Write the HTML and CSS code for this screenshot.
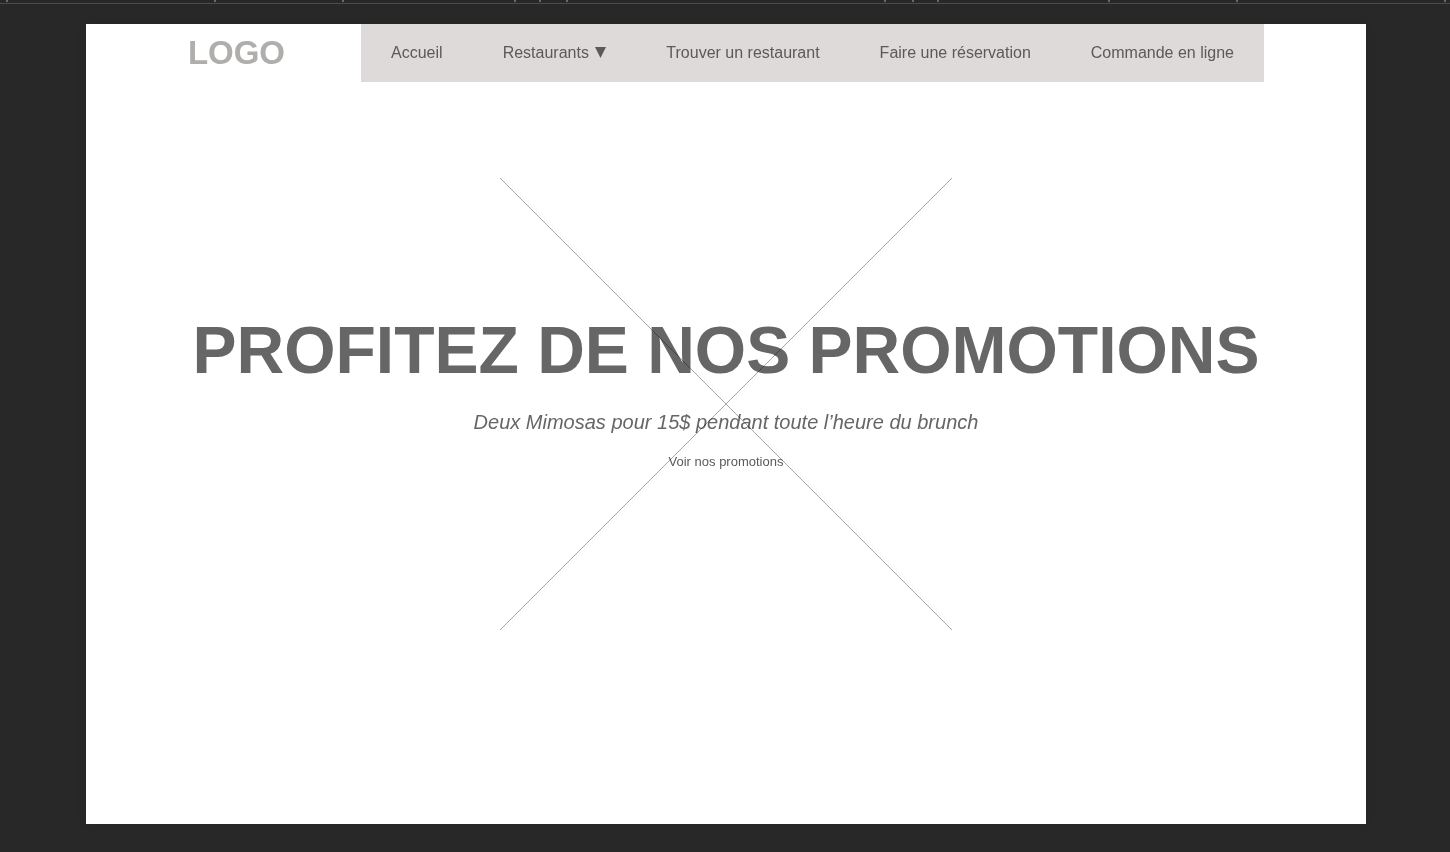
FILE: index.html
```html
<!DOCTYPE html>
<html lang="fr">
<head>
<meta charset="utf-8">
<title>Promotions</title>
<link rel="stylesheet" href="styles.css">
</head>
<body>
<svg class="ruler" viewBox="0 0 1450 4" preserveAspectRatio="none" aria-hidden="true">
  <path class="ruler-ticks" d="M6 0h2v2h-2zM214 0h2v2h-2zM342 0h2v2h-2zM514 0h2v2h-2zM539 0h2v2h-2zM566 0h2v2h-2zM884 0h2v2h-2zM912 0h2v2h-2zM937 0h2v2h-2zM1108 0h2v2h-2zM1236 0h2v2h-2zM1444 0h2v2h-2z"/>
  <path class="ruler-edge" d="M0 3h1450v1H0z"/>
</svg>
<div class="artboard">
  <header class="header">
    <a class="logo" href="#">LOGO</a>
    <nav class="nav">
      <a class="nav-link" href="#">Accueil</a>
      <a class="nav-link" href="#">Restaurants
        <svg class="caret" viewBox="0 0 12 12" aria-hidden="true"><path d="M0 0h12L6 12z"/></svg>
      </a>
      <a class="nav-link" href="#">Trouver un restaurant</a>
      <a class="nav-link" href="#">Faire une réservation</a>
      <a class="nav-link" href="#">Commande en ligne</a>
    </nav>
  </header>
  <main class="hero">
    <div class="promo">
      <h1 class="title">PROFITEZ DE NOS PROMOTIONS</h1>
      <p class="subtitle">Deux Mimosas pour 15$ pendant toute l’heure du brunch</p>
      <a class="more" href="#">Voir nos promotions</a>
    </div>
    <svg class="placeholder" viewBox="0 0 452 452" aria-hidden="true"><path d="M0 0L452 452M452 0L0 452"/></svg>
  </main>
</div>
</body>
</html>
```
FILE: styles.css
```css
* { box-sizing: border-box; }
body {
  margin: 0;
  min-height: 100vh;
  display: flex;
  flex-direction: column;
  background: #282828;
  color: #5a5a5a;
  font-family: "Liberation Sans", Arial, sans-serif;
}
a { color: inherit; text-decoration: none; }
.ruler { display: block; width: 100%; height: 4px; }
.ruler-ticks { fill: #6a6a6a; }
.ruler-edge { fill: #4b4b4b; }
.artboard {
  flex: 1;
  margin: 20px 84px 28px 86px;
  background: #fff;
  box-shadow: 0 0 10px rgba(0, 0, 0, 0.08);
}
.header {
  display: flex;
  justify-content: flex-end;
  align-items: center;
  gap: 76px;
  padding-right: 102px;
}
.logo {
  color: #afaeac;
  font-size: 33px;
  line-height: 58px;
  font-weight: 700;
}
.nav {
  display: flex;
  background: #dedad9;
}
.nav-link {
  padding: 0 30px;
  font-size: 16px;
  line-height: 58px;
  white-space: nowrap;
}
.caret {
  width: 11px;
  height: 11px;
  margin-left: 2px;
  fill: #5a5a5a;
}
.hero {
  display: grid;
  justify-items: center;
  padding: 96px 16px;
}
.promo, .placeholder { grid-area: 1 / 1; }
.promo {
  display: flex;
  flex-direction: column;
  align-items: center;
  padding-top: 134px;
  text-align: center;
}
.title {
  margin: 0;
  color: #666;
  font-size: 66px;
  line-height: 76px;
}
.subtitle {
  margin: 20px 0 0;
  color: #666;
  font-size: 20px;
  line-height: 28px;
  font-style: italic;
}
.more {
  margin-top: 16px;
  font-size: 13px;
  line-height: 20px;
}
.placeholder {
  width: 452px;
  height: 452px;
  overflow: visible;
  stroke: #a6a6a6;
  stroke-width: 1;
  mix-blend-mode: multiply;
  pointer-events: none;
}
```
